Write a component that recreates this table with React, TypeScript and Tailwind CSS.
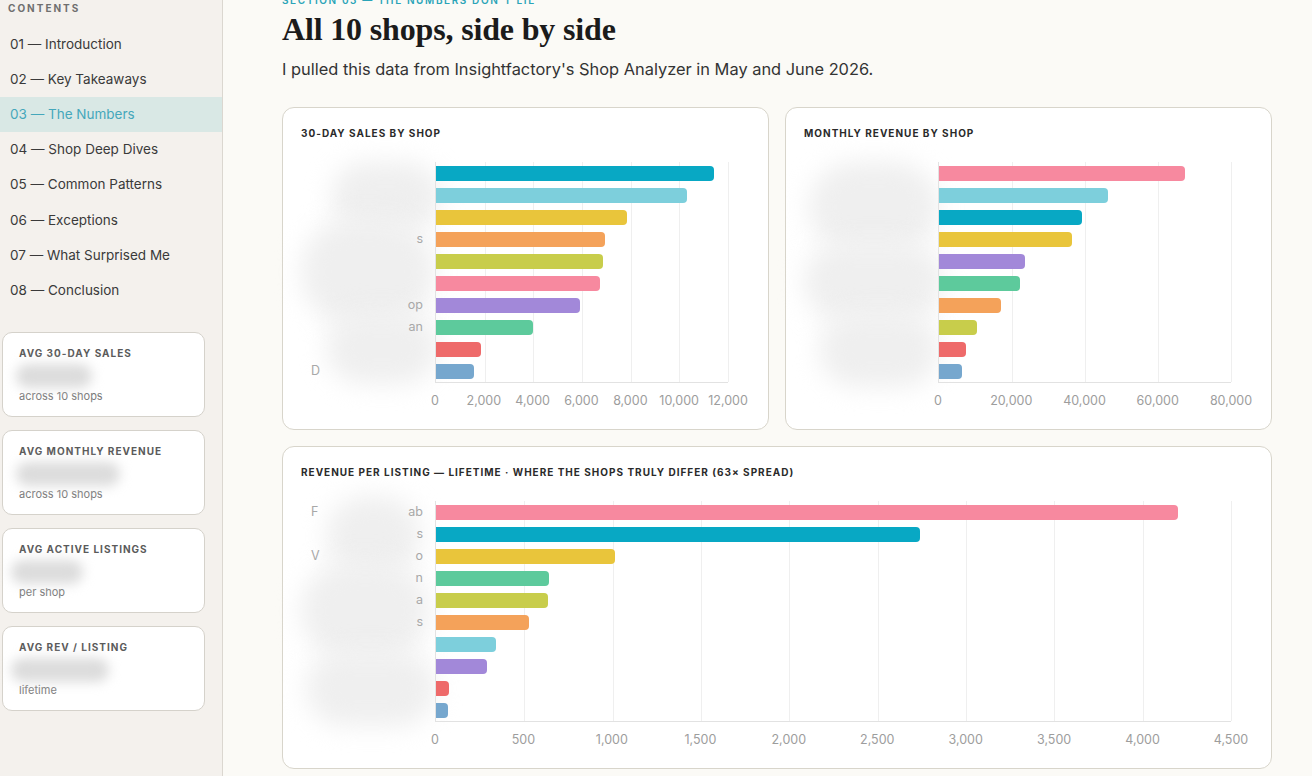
import React from "react";

type Bar = { v: number; c: string; head?: string; tail?: string };

const TEAL = "#08a8c4";
const LCYAN = "#7dcfdc";
const YELLOW = "#e9c53b";
const ORANGE = "#f4a25a";
const OLIVE = "#c8cd4b";
const PINK = "#f7899f";
const PURPLE = "#a288d9";
const GREEN = "#5dca9c";
const RED = "#ee6a6a";
const BLUE = "#76a7ce";

const sales: Bar[] = [
  { v: 11425, c: TEAL },
  { v: 10315, c: LCYAN },
  { v: 7849, c: YELLOW },
  { v: 6945, c: ORANGE, tail: "s" },
  { v: 6863, c: OLIVE },
  { v: 6740, c: PINK },
  { v: 5918, c: PURPLE, tail: "op" },
  { v: 3986, c: GREEN, tail: "an" },
  { v: 1849, c: RED },
  { v: 1562, c: BLUE, head: "D" },
];

const revenue: Bar[] = [
  { v: 67310, c: PINK },
  { v: 46345, c: LCYAN },
  { v: 39172, c: TEAL },
  { v: 36414, c: YELLOW },
  { v: 23448, c: PURPLE },
  { v: 22069, c: GREEN },
  { v: 17103, c: ORANGE },
  { v: 10483, c: OLIVE },
  { v: 7448, c: RED },
  { v: 6345, c: BLUE },
];

const perListing: Bar[] = [
  { v: 4201, c: PINK, head: "F", tail: "ab" },
  { v: 2741, c: TEAL, tail: "s" },
  { v: 1015, c: YELLOW, head: "V", tail: "o" },
  { v: 637, c: GREEN, tail: "n" },
  { v: 632, c: OLIVE, tail: "a" },
  { v: 524, c: ORANGE, tail: "s" },
  { v: 338, c: LCYAN },
  { v: 288, c: PURPLE },
  { v: 73, c: RED },
  { v: 68, c: BLUE },
];

const toc = [
  "01 — Introduction",
  "02 — Key Takeaways",
  "03 — The Numbers",
  "04 — Shop Deep Dives",
  "05 — Common Patterns",
  "06 — Exceptions",
  "07 — What Surprised Me",
  "08 — Conclusion",
];

const stats = [
  { label: "Avg 30-Day Sales", sub: "across 10 shops", blob: "w-[76px] ml-[-3px]" },
  { label: "Avg Monthly Revenue", sub: "across 10 shops", blob: "w-[104px] ml-[-3px]" },
  { label: "Avg Active Listings", sub: "per shop", blob: "w-[72px] ml-[-8px]" },
  { label: "Avg Rev / Listing", sub: "lifetime", blob: "w-[98px] ml-[-8px]" },
];

const fmt = (n: number) => n.toLocaleString("en-US");

function BarChart({
  title,
  bars,
  max,
  step,
  blobs,
}: {
  title: string;
  bars: Bar[];
  max: number;
  step: number;
  blobs: string[];
}) {
  const ticks: number[] = [];
  for (let t = 0; t <= max; t += step) ticks.push(t);

  return (
    <div className="rounded-[12px] border border-[#d8d5cb] bg-white pb-[20px] pl-[18px] pr-[40px] pt-[18px]">
      <div className="text-[10px] font-bold uppercase leading-[14px] tracking-[0.1em] text-[#2a2a2a]">
        {title}
      </div>
      <div className="mt-[22px] flex">
        {/* shop names (redacted) */}
        <div className="relative w-[134px] shrink-0">
          {blobs.map((b, i) => (
            <div key={i} className={`absolute rounded-full bg-[#efefef] blur-[12px] ${b}`} />
          ))}
          <div className="relative">
            {bars.map((b, i) => (
              <div
                key={i}
                className="flex h-[22px] items-center justify-between pr-[12px] text-[12.5px] text-[#a8a8a8]"
              >
                <span className="pl-[10px]">{b.head ?? ""}</span>
                <span>{b.tail ?? ""}</span>
              </div>
            ))}
          </div>
        </div>

        <div className="flex-1">
          <div className="relative border-b border-l border-[#e2e2e2]">
            {ticks.slice(1).map((t) => (
              <div
                key={t}
                className="absolute bottom-0 top-0 w-px bg-[#efefef]"
                style={{ left: `${(t / max) * 100}%` }}
              />
            ))}
            {bars.map((b, i) => (
              <div key={i} className="relative flex h-[22px] items-center">
                <div
                  className="h-[15px] rounded-r-[4px]"
                  style={{ width: `${(b.v / max) * 100}%`, backgroundColor: b.c }}
                />
              </div>
            ))}
          </div>
          <div className="relative mt-[10px] h-[16px]">
            {ticks.map((t) => (
              <span
                key={t}
                className="absolute top-0 -translate-x-1/2 text-[12.5px] leading-[16px] text-[#9d9d9d]"
                style={{ left: `${(t / max) * 100}%` }}
              >
                {fmt(t)}
              </span>
            ))}
          </div>
        </div>
      </div>
    </div>
  );
}

export default function App() {
  return (
    <div className="flex h-[776px] overflow-hidden bg-[#fbfaf6] font-['Inter','Noto_Sans',sans-serif] text-[#2b2b2b]">
      {/* sidebar */}
      <aside className="w-[223px] shrink-0 border-r border-[#dbd7d0] bg-[#f4f1ed]">
        <div className="pl-[8px] pt-[3px] text-[10px] font-bold leading-[10px] tracking-[0.2em] text-[#6f6f6f]">
          CONTENTS
        </div>
        <nav className="mt-[13px]">
          {toc.map((item, i) => (
            <div
              key={item}
              className={
                i === 2
                  ? "flex h-[35px] items-center bg-[#d9e8e5] pl-[10px] text-[13.5px] text-[#45a7bb]"
                  : "flex h-[35.3px] items-center pl-[10px] text-[13.5px] text-[#3a3a3a]"
              }
            >
              {item}
            </div>
          ))}
        </nav>
        <div className="mt-[24px] flex flex-col gap-[13px] pl-[2px] pr-[17px]">
          {stats.map((s) => (
            <div
              key={s.label}
              className="h-[85px] rounded-[10px] border border-[#d5d2cb] bg-white pl-[16px] pt-[14px]"
            >
              <div className="text-[10px] font-bold uppercase leading-[12px] tracking-[0.1em] text-[#5a5a5a]">
                {s.label}
              </div>
              <div className={`mt-[5px] h-[24px] rounded-full bg-[#dcdcdc] blur-[6px] ${s.blob}`} />
              <div className="mt-[1px] text-[11px] leading-[15px] text-[#7a7a7a]">{s.sub}</div>
            </div>
          ))}
        </div>
      </aside>

      {/* main */}
      <main className="flex-1 pl-[59px] pr-[40px]">
        <div className="-mt-[5px] text-[10px] font-semibold leading-[10px] tracking-[0.16em] text-[#2aa4b8]">
          SECTION 03 — THE NUMBERS DON'T LIE
        </div>
        <h1 className="mt-[7px] font-['Liberation_Serif','DejaVu_Serif',serif] text-[32px] font-bold leading-[35px] tracking-[-0.005em] text-[#1b1b1b]">
          All 10 shops, side by side
        </h1>
        <p className="mt-[10px] text-[16.4px] leading-[24px] text-[#333]">
          I pulled this data from Insightfactory's Shop Analyzer in May and June 2026.
        </p>

        <div className="mt-[26px] grid grid-cols-2 gap-[16px]">
          <BarChart
            title="30-Day Sales by Shop"
            bars={sales}
            max={12000}
            step={2000}
            blobs={[
              "left-[30px] top-[0px] h-[70px] w-[110px]",
              "left-[0px] top-[55px] h-[110px] w-[134px]",
              "left-[25px] top-[150px] h-[72px] w-[112px]",
            ]}
          />
          <BarChart
            title="Monthly Revenue by Shop"
            bars={revenue}
            max={80000}
            step={20000}
            blobs={[
              "left-[5px] top-[0px] h-[90px] w-[130px]",
              "left-[0px] top-[80px] h-[80px] w-[140px]",
              "left-[15px] top-[150px] h-[75px] w-[120px]",
            ]}
          />
        </div>

        <div className="mt-[16px]">
          <BarChart
            title="Revenue per Listing — Lifetime · Where the shops truly differ (63× spread)"
            bars={perListing}
            max={4500}
            step={500}
            blobs={[
              "left-[25px] top-[-5px] h-[80px] w-[95px]",
              "left-[0px] top-[60px] h-[100px] w-[128px]",
              "left-[5px] top-[150px] h-[75px] w-[130px]",
            ]}
          />
        </div>
      </main>
    </div>
  );
}
